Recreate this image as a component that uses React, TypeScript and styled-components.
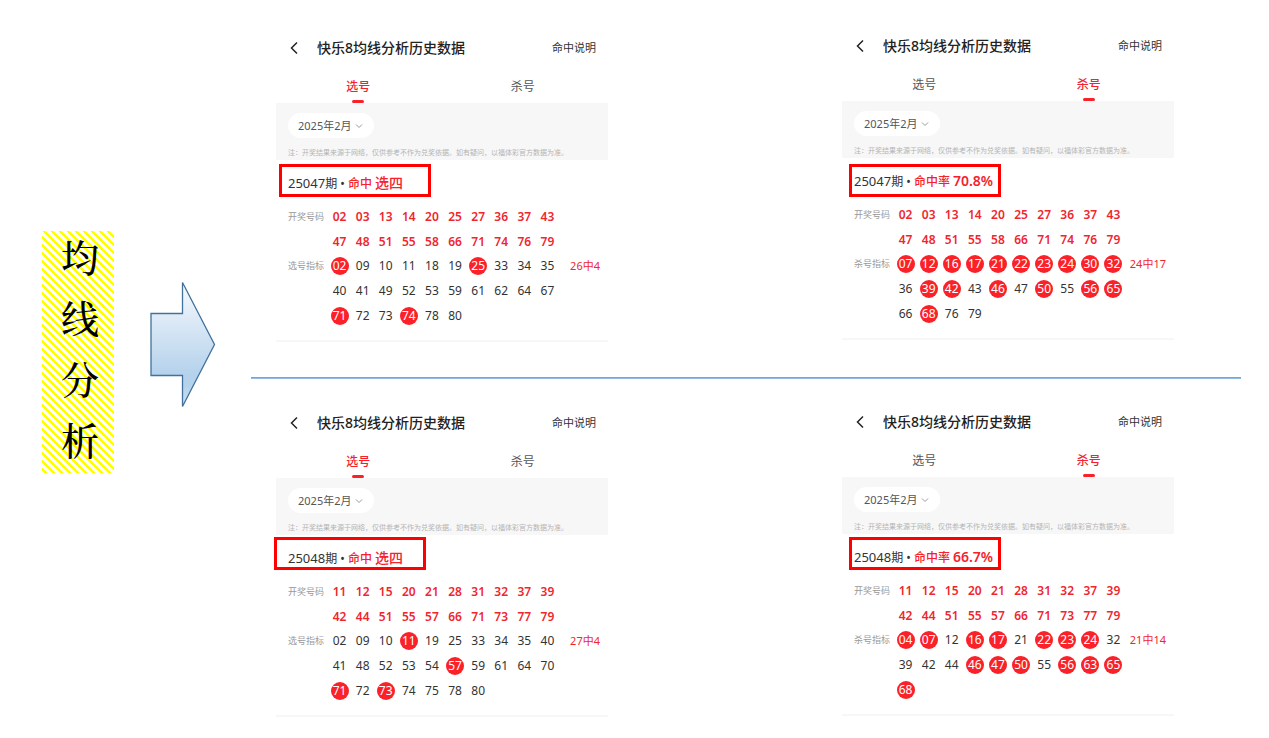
import React from "react";
import styled, { createGlobalStyle } from "styled-components";

const GlobalStyle = createGlobalStyle`
  * { box-sizing: border-box; }
  body {
    margin: 0;
    background: #fff;
    font-family: "Noto Sans", "Noto Sans CJK SC", sans-serif;
    color: #333;
  }
  button, select { font: inherit; color: inherit; border: 0; padding: 0; background: none; }
`;

const Page = styled.main`
  display: flex;
  align-items: flex-start;
  min-height: 100vh;
  padding: 0 28px 0 42px;
`;

const Topic = styled.h1`
  flex: none;
  display: flex;
  flex-direction: column;
  gap: 11px;
  width: 72px;
  height: 242px;
  margin: 231px 0 0;
  padding-left: 4px;
  background-color: #fff;
  background-image: linear-gradient(
    45deg,
    #ff0 19%, #fff 19%, #fff 50%, #ff0 50%, #ff0 69%, #fff 69%
  );
  background-size: 8px 8px;
  color: #000;
  font-family: "Noto Serif CJK SC", "Noto Sans CJK SC", serif;
  font-size: 38px;
  font-weight: 500;
  line-height: 50px;
  text-align: center;
`;

const Arrow = styled.svg`
  flex: none;
  width: 66px;
  height: 130px;
  margin: 280px 0 0 36px;
`;

const Stage = styled.div`
  flex: 1;
  min-width: 0;
  margin-left: 35px;
`;

const Row = styled.section`
  display: grid;
  grid-template-columns: 1fr 1fr;
  column-gap: 234px;
  align-items: start;
  padding: 0 67px 0 25px;
`;

const Rule = styled.hr`
  height: 2px;
  margin: 35px 0 0;
  border: 0;
  background: linear-gradient(#6fa8dc 50%, #8fbbe5 50%);
`;

const Panel = styled.article<{ $top: number }>`
  position: relative;
  margin-top: ${(p) => p.$top}px;
  border-bottom: 2px solid #f7f7f7;
`;

const Header = styled.header`
  display: flex;
  align-items: center;
  height: 36px;
  padding: 0 12px;
`;

const Back = styled.button`
  display: flex;
  width: 29px;
  svg { width: 12px; height: 14px; }
`;

const Title = styled.h2`
  flex: 1;
  margin: 0;
  color: #222;
  font-size: 14px;
  font-weight: 500;
  line-height: 20px;
  white-space: nowrap;
`;

const Help = styled.a`
  color: #333;
  font-size: 11px;
  line-height: 16px;
  text-decoration: none;
  white-space: nowrap;
`;

const Tabs = styled.nav`
  display: flex;
  height: 37px;
  margin-right: 3px;
`;

const Tab = styled.button<{ $active: boolean }>`
  position: relative;
  flex: 1;
  padding-top: 4px;
  color: ${(p) => (p.$active ? "#f5222d" : "#555")};
  font-size: 12px;
  font-weight: ${(p) => (p.$active ? 500 : 400)};
  line-height: 18px;
  & + &::before {
    content: "";
    position: absolute;
    left: 0;
    top: 14px;
    width: 1px;
    height: 12px;
    background: #eee;
  }
  &::after {
    content: "";
    display: ${(p) => (p.$active ? "block" : "none")};
    position: absolute;
    left: calc(50% - 6px);
    bottom: 0;
    width: 12px;
    height: 3px;
    border-radius: 2px;
    background: #fb2128;
  }
`;

const Filter = styled.div`
  height: 57px;
  padding: 10px 12px 0;
  background: #f7f7f7;
`;

const Month = styled.button`
  display: flex;
  align-items: center;
  gap: 4px;
  width: 86px;
  height: 25px;
  padding-left: 10px;
  border-radius: 13px;
  background: #fff;
  color: #555;
  font-size: 11px;
  line-height: 16px;
  svg { width: 8px; height: 6px; }
`;

const Note = styled.p`
  margin: 10px 0 0;
  color: #b4b4b4;
  font-size: 7px;
  line-height: 10px;
  white-space: nowrap;
`;

const Result = styled.h3`
  height: 45px;
  margin: 0;
  padding: 0 12px;
  color: #333;
  font-size: 13px;
  font-weight: 400;
  line-height: 45px;
  white-space: pre;
`;

const Unit = styled.span`
  font-size: 12px;
`;

const Hit = styled.span`
  color: #f5222d;
  font-size: 12px;
  font-weight: 500;
`;

const HitValue = styled.strong<{ $bold: boolean }>`
  padding-left: 3px;
  color: #f5222d;
  font-size: 14px;
  font-weight: ${(p) => (p.$bold ? 600 : 500)};
`;

const Group = styled.div`
  display: grid;
  grid-template-columns: 40px 231px 1fr;
  padding: 0 8px 0 12px;
  line-height: 24px;
`;

const Label = styled.span`
  color: #999;
  font-size: 9px;
`;

const Numbers = styled.div`
  display: grid;
  grid-template-columns: repeat(10, 1fr);
  grid-auto-rows: 24px;
  row-gap: 1px;
  place-items: center;
`;

const Num = styled.span<{ $kind: "draw" | "plain" | "hit" }>`
  width: 18px;
  height: 18px;
  border-radius: 50%;
  background: ${(p) => (p.$kind === "hit" ? "#fb2128" : "transparent")};
  color: ${(p) => ({ draw: "#f0262e", plain: "#333", hit: "#fff" })[p.$kind]};
  font-size: 12px;
  font-weight: ${(p) => (p.$kind === "draw" ? 600 : 400)};
  line-height: 18px;
  text-align: center;
`;

const Tally = styled.span`
  color: #f0262e;
  font-size: 11px;
  text-align: right;
  white-space: nowrap;
`;

const Body = styled.div`
  padding-bottom: 12px;
`;

const Mark = styled.div<{ $x: number; $y: number }>`
  position: absolute;
  left: ${(p) => p.$x}px;
  top: ${(p) => p.$y}px;
  width: 152px;
  height: 33px;
  border: 3px solid #f00;
  pointer-events: none;
`;

type PanelData = {
  top: number;
  mark: [number, number];
  tab: "选号" | "杀号";
  issue: string;
  hit: string;
  value: string;
  draw: string;
  picks: string;
  tally: string;
};

const DRAW_47 = "02 03 13 14 20 25 27 36 37 43 47 48 51 55 58 66 71 74 76 79";
const DRAW_48 = "11 12 15 20 21 28 31 32 37 39 42 44 51 55 57 66 71 73 77 79";

const upper: PanelData[] = [
  {
    top: 30, mark: [3, 134], tab: "选号", issue: "25047", hit: "命中", value: "选四", draw: DRAW_47,
    picks: "*02 09 10 11 18 19 *25 33 34 35 40 41 49 52 53 59 61 62 64 67 *71 72 73 *74 78 80",
    tally: "26中4",
  },
  {
    top: 28, mark: [7, 136], tab: "杀号", issue: "25047", hit: "命中率", value: "70.8%", draw: DRAW_47,
    picks: "*07 *12 *16 *17 *21 *22 *23 *24 *30 *32 36 *39 *42 43 *46 47 *50 55 *56 *65 66 *68 76 79",
    tally: "24中17",
  },
];

const lower: PanelData[] = [
  {
    top: 26, mark: [-2, 132], tab: "选号", issue: "25048", hit: "命中", value: "选四", draw: DRAW_48,
    picks: "02 09 10 *11 19 25 33 34 35 40 41 48 52 53 54 *57 59 61 64 70 *71 72 *73 74 75 78 80",
    tally: "27中4",
  },
  {
    top: 25, mark: [7, 133], tab: "杀号", issue: "25048", hit: "命中率", value: "66.7%", draw: DRAW_48,
    picks: "*04 *07 12 *16 *17 21 *22 *23 *24 32 39 42 44 *46 *47 *50 55 *56 *63 *65 *68",
    tally: "21中14",
  },
];

function History({ data }: { data: PanelData }) {
  return (
    <Panel $top={data.top}>
      <Header>
        <Back aria-label="返回">
          <svg viewBox="0 0 12 14" fill="none" stroke="#222" strokeWidth="1.5">
            <path d="M9 1.5 3.5 7 9 12.5" />
          </svg>
        </Back>
        <Title>快乐8均线分析历史数据</Title>
        <Help href="#">命中说明</Help>
      </Header>
      <Tabs>
        <Tab $active={data.tab === "选号"}>选号</Tab>
        <Tab $active={data.tab === "杀号"}>杀号</Tab>
      </Tabs>
      <Filter>
        <Month>
          2025年2月
          <svg viewBox="0 0 8 6" fill="none" stroke="#999" strokeWidth="1">
            <path d="M1 1.5 4 4.5 7 1.5" />
          </svg>
        </Month>
        <Note>注：开奖结果来源于网络，仅供参考不作为兑奖依据。如有疑问，以福体彩官方数据为准。</Note>
      </Filter>
      <Result>
        {data.issue}
        <Unit>期 • </Unit>
        <Hit>{data.hit}</Hit>
        <HitValue $bold={data.value.endsWith("%")}>{data.value}</HitValue>
      </Result>
      <Body>
        <Group>
          <Label>开奖号码</Label>
          <Numbers>
            {data.draw.split(" ").map((n) => (
              <Num key={n} $kind="draw">{n}</Num>
            ))}
          </Numbers>
        </Group>
        <Group>
          <Label>{data.tab}指标</Label>
          <Numbers>
            {data.picks.split(" ").map((n) => (
              <Num key={n} $kind={n[0] === "*" ? "hit" : "plain"}>{n.replace("*", "")}</Num>
            ))}
          </Numbers>
          <Tally>{data.tally}</Tally>
        </Group>
      </Body>
      <Mark $x={data.mark[0]} $y={data.mark[1]} />
    </Panel>
  );
}

export default function App() {
  return (
    <>
      <GlobalStyle />
      <Page>
        <Topic>
          {["均", "线", "分", "析"].map((c) => (
            <span key={c}>{c}</span>
          ))}
        </Topic>
        <Arrow viewBox="0 0 66 130" aria-hidden="true">
          <defs>
            <linearGradient id="arrowFill" x1="0" y1="0" x2="0" y2="1">
              <stop offset="0" stopColor="#f7fafd" />
              <stop offset="0.74" stopColor="#b5d2ec" />
              <stop offset="0.83" stopColor="#b5d2ec" />
              <stop offset="1" stopColor="#cee1f2" />
            </linearGradient>
          </defs>
          <path
            d="M1 33.5H32.5V2.5L64.5 64.5 32.5 126.5V95.5H1Z"
            fill="url(#arrowFill)"
            stroke="#41719c"
            strokeWidth="1.3"
          />
        </Arrow>
        <Stage>
          <Row>
            {upper.map((d) => <History key={d.tab} data={d} />)}
          </Row>
          <Rule />
          <Row>
            {lower.map((d) => <History key={d.tab} data={d} />)}
          </Row>
        </Stage>
      </Page>
    </>
  );
}
